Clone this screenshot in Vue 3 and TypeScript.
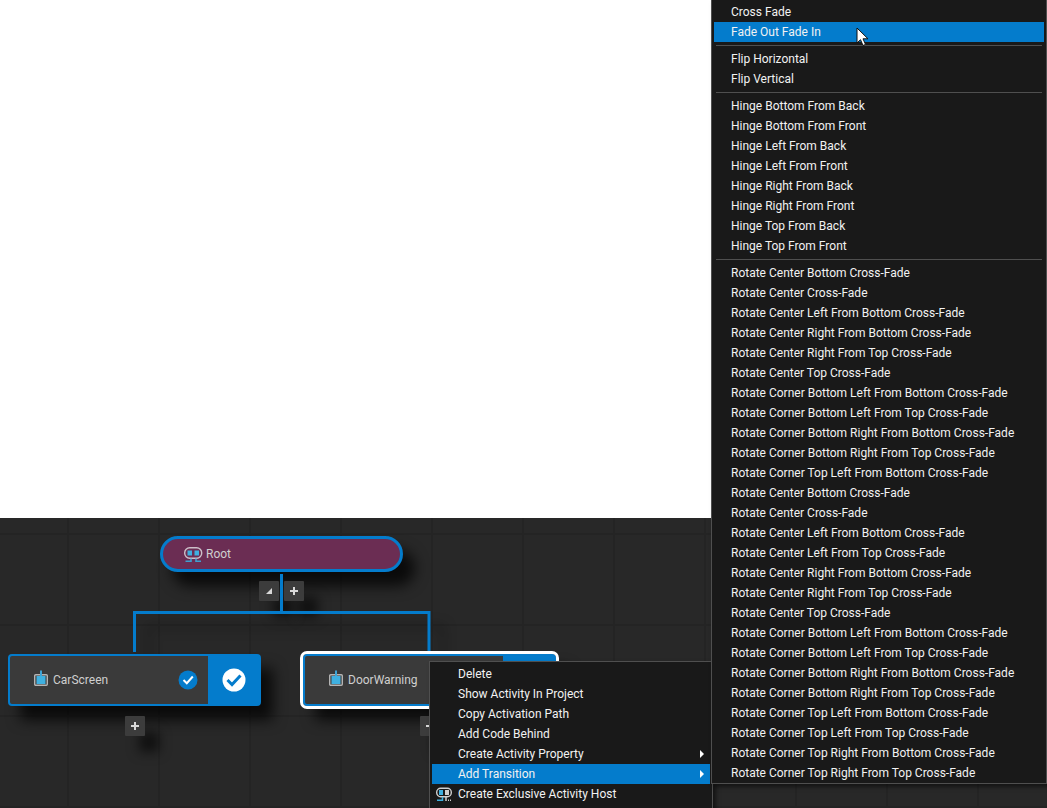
<script setup lang="ts">
interface MenuEntry {
  label: string
  submenu?: boolean
  active?: boolean
  icon?: boolean
}

const contextItems: MenuEntry[] = [
  { label: 'Delete' },
  { label: 'Show Activity In Project' },
  { label: 'Copy Activation Path' },
  { label: 'Add Code Behind' },
  { label: 'Create Activity Property', submenu: true },
  { label: 'Add Transition', submenu: true, active: true },
  { label: 'Create Exclusive Activity Host', icon: true },
]

const activeTransition = 'Fade Out Fade In'

const transitionGroups: string[][] = [
  ['Cross Fade', 'Fade Out Fade In'],
  ['Flip Horizontal', 'Flip Vertical'],
  [
    'Hinge Bottom From Back',
    'Hinge Bottom From Front',
    'Hinge Left From Back',
    'Hinge Left From Front',
    'Hinge Right From Back',
    'Hinge Right From Front',
    'Hinge Top From Back',
    'Hinge Top From Front',
  ],
  [
    'Rotate Center Bottom Cross-Fade',
    'Rotate Center Cross-Fade',
    'Rotate Center Left From Bottom Cross-Fade',
    'Rotate Center Right From Bottom Cross-Fade',
    'Rotate Center Right From Top Cross-Fade',
    'Rotate Center Top Cross-Fade',
    'Rotate Corner Bottom Left From Bottom Cross-Fade',
    'Rotate Corner Bottom Left From Top Cross-Fade',
    'Rotate Corner Bottom Right From Bottom Cross-Fade',
    'Rotate Corner Bottom Right From Top Cross-Fade',
    'Rotate Corner Top Left From Bottom Cross-Fade',
    'Rotate Center Bottom Cross-Fade',
    'Rotate Center Cross-Fade',
    'Rotate Center Left From Bottom Cross-Fade',
    'Rotate Center Left From Top Cross-Fade',
    'Rotate Center Right From Bottom Cross-Fade',
    'Rotate Center Right From Top Cross-Fade',
    'Rotate Center Top Cross-Fade',
    'Rotate Corner Bottom Left From Bottom Cross-Fade',
    'Rotate Corner Bottom Left From Top Cross-Fade',
    'Rotate Corner Bottom Right From Bottom Cross-Fade',
    'Rotate Corner Bottom Right From Top Cross-Fade',
    'Rotate Corner Top Left From Bottom Cross-Fade',
    'Rotate Corner Top Left From Top Cross-Fade',
    'Rotate Corner Top Right From Bottom Cross-Fade',
    'Rotate Corner Top Right From Top Cross-Fade',
  ],
]
</script>

<template>
  <main class="workspace">
    <section class="canvas" aria-label="Activity graph">
      <div class="node root-node">
        <svg width="20" height="18" viewBox="0 0 20 18" aria-hidden="true">
          <rect x="1.700" y="2.700" width="17" height="10.600" rx="5" fill="none" stroke="#cdbfc9" stroke-width="1.400" />
          <rect x="4.500" y="5.500" width="4.500" height="5" fill="#3fb0e0" />
          <rect x="11.500" y="5.500" width="4.500" height="5" fill="#3fb0e0" />
          <path d="M8 13.500V16.200H2.500M13 13.500V16.200H18" fill="none" stroke="#3f9fd0" stroke-width="1.600" />
        </svg>
        <span>Root</span>
      </div>

      <button class="tool collapse" type="button" aria-label="Collapse">
        <svg width="6" height="6" viewBox="0 0 6 6" aria-hidden="true"><path d="M6 0V6H0Z" fill="#d8d8d8" /></svg>
      </button>
      <button class="tool add-root" type="button" aria-label="Add child to Root">
        <svg width="8" height="8" viewBox="0 0 8 8" aria-hidden="true"><path d="M4 0V8M0 4H8" stroke="#d8d8d8" stroke-width="2" /></svg>
      </button>

      <svg class="links" width="460" height="150" viewBox="0 0 460 150" aria-hidden="true">
        <path class="branch" d="M134.500 134V94.500H429V134" fill="none" stroke="#047ccc" stroke-width="3" />
        <path d="M281.500 56V95" stroke="#047ccc" stroke-width="3" />
      </svg>

      <div class="node screen-node car">
        <div class="body">
          <svg width="16" height="20" viewBox="0 0 16 20" aria-hidden="true">
            <rect x="1.700" y="4.700" width="12.600" height="10.600" rx="1" fill="none" stroke="#b4b4b4" stroke-width="1.400" />
            <rect x="3.500" y="6" width="9" height="8" fill="#3fb0e0" />
            <path d="M8 0.500V6" stroke="#3fa4d6" stroke-width="2" />
          </svg>
          <span>CarScreen</span>
          <svg class="state" width="20" height="20" viewBox="0 0 20 20" aria-hidden="true">
            <circle cx="10" cy="10" r="9.500" fill="#047ccc" />
            <path d="M5.500 10L8.800 13.200L14.800 6.500" fill="none" stroke="#fff" stroke-width="2" />
          </svg>
        </div>
        <div class="side">
          <svg width="24" height="24" viewBox="0 0 24 24" aria-hidden="true">
            <circle cx="12" cy="12" r="11.500" fill="#fff" />
            <path d="M5.500 12L10 16.500L18.500 7.500" fill="none" stroke="#047ccc" stroke-width="3" />
          </svg>
        </div>
      </div>

      <div class="node screen-node door">
        <div class="body">
          <svg width="16" height="20" viewBox="0 0 16 20" aria-hidden="true">
            <rect x="1.700" y="4.700" width="12.600" height="10.600" rx="1" fill="none" stroke="#b4b4b4" stroke-width="1.400" />
            <rect x="3.500" y="6" width="9" height="8" fill="#3fb0e0" />
            <path d="M8 0.500V6" stroke="#3fa4d6" stroke-width="2" />
          </svg>
          <span>DoorWarning</span>
        </div>
        <div class="side"></div>
      </div>

      <button class="tool add-car" type="button" aria-label="Add child to CarScreen">
        <svg width="8" height="8" viewBox="0 0 8 8" aria-hidden="true"><path d="M4 0V8M0 4H8" stroke="#d8d8d8" stroke-width="2" /></svg>
      </button>
      <button class="tool add-door" type="button" aria-label="Add child to DoorWarning">
        <svg width="8" height="8" viewBox="0 0 8 8" aria-hidden="true"><path d="M4 0V8M0 4H8" stroke="#d8d8d8" stroke-width="2" /></svg>
      </button>
    </section>

    <div class="menu context" role="menu" aria-label="Activity">
      <button
        v-for="item in contextItems"
        :key="item.label"
        class="item"
        :class="{ active: item.active }"
        type="button"
        role="menuitem"
      >
        <span class="gutter">
          <svg v-if="item.icon" width="18" height="16" viewBox="0 0 18 16" aria-hidden="true">
            <rect x="1.700" y="2.200" width="14.600" height="8.600" rx="4" fill="none" stroke="#d0d0d0" stroke-width="1.400" />
            <rect x="4" y="4" width="4" height="5" fill="#3fb0e0" />
            <rect x="10" y="4" width="4" height="5" fill="#d0d0d0" />
            <path d="M7.500 11V14.300H2" fill="none" stroke="#3fb0e0" stroke-width="1.500" />
            <path d="M11 11V15M13 14.300H14M15 14.300H16" fill="none" stroke="#d0d0d0" stroke-width="1.500" />
          </svg>
        </span>
        <span class="label">{{ item.label }}</span>
        <svg v-if="item.submenu" class="arrow" width="4" height="8" viewBox="0 0 4 8" aria-hidden="true">
          <path d="M0 0L4 4L0 8Z" fill="#fff" />
        </svg>
      </button>
    </div>

    <div class="menu transitions" role="menu" aria-label="Add Transition">
      <div v-for="(group, g) in transitionGroups" :key="g" class="group" role="group">
        <button
          v-for="(label, i) in group"
          :key="i"
          class="item"
          :class="{ active: label === activeTransition }"
          type="button"
          role="menuitem"
        >
          {{ label }}
        </button>
      </div>
    </div>

    <svg class="pointer" width="14" height="20" viewBox="0 0 14 20" aria-hidden="true">
      <path d="M1 1V16L4.500 12.700L7 18.500L9.500 17.400L7 11.800H12Z" fill="#fff" stroke="#111" stroke-width="1" />
    </svg>
  </main>
</template>

<style>
body {
  margin: 0;
  background: #fff;
}
</style>

<style scoped>
.workspace {
  position: relative;
  display: flex;
  flex-direction: column;
  min-height: 100vh;
  overflow: hidden;
  font-family: Roboto, 'Open Sans', sans-serif;
  font-size: 12px;
}

.canvas {
  position: relative;
  height: 290px;
  margin-top: auto;
  background-color: #282828;
  background-image:
    linear-gradient(90deg, #242424 2px, transparent 2px),
    linear-gradient(#242424 2px, transparent 2px);
  background-size: 91px 91px;
  background-position: 67px 15px;
}

.links {
  position: absolute;
  top: 0;
  left: 0;
}

.branch {
  filter: drop-shadow(14px 14px 6px rgba(0, 0, 0, 0.35));
}

.node {
  position: absolute;
  box-sizing: border-box;
  display: flex;
  color: #cfcfcf;
  box-shadow: 12px 14px 14px rgba(0, 0, 0, 0.75);
}

.root-node {
  top: 18px;
  left: 160px;
  width: 243px;
  height: 36px;
  align-items: center;
  gap: 3px;
  padding-left: 20px;
  border: 3px solid #047ccc;
  border-radius: 18px;
  background: #6b2d53;
}

.screen-node {
  width: 253px;
  height: 52px;
  border: 2px solid #047ccc;
  border-radius: 4px;
  background: #3a3a3a;
}

.car {
  top: 136px;
  left: 8px;
}

.door {
  top: 136px;
  left: 303px;
  outline: 3px solid #fff;
}

.body {
  display: flex;
  flex: 1;
  align-items: center;
  gap: 4px;
  padding: 0 10px 0 23px;
}

.state {
  margin-left: auto;
}

.side {
  display: flex;
  flex: none;
  align-items: center;
  justify-content: center;
  width: 51px;
  background: #047ccc;
}

.tool {
  position: absolute;
  display: flex;
  align-items: center;
  justify-content: center;
  width: 20px;
  height: 20px;
  padding: 0;
  border: 0;
  border-radius: 1px;
  background: #3c3c3c;
  box-shadow: 14px 16px 12px rgba(0, 0, 0, 0.6);
}

.collapse {
  top: 63px;
  left: 259px;
}

.add-root {
  top: 63px;
  left: 284px;
}

.add-car {
  top: 198px;
  left: 125px;
}

.add-door {
  top: 198px;
  left: 420px;
}

.menu {
  position: absolute;
  box-sizing: border-box;
  border: 1px solid #4f4f4f;
  background: #191919;
  box-shadow: 3px 3px 4px rgba(0, 0, 0, 0.5);
}

.item {
  display: flex;
  align-items: center;
  width: 100%;
  height: 20px;
  padding: 0;
  border: 0;
  background: transparent;
  color: #f2f2f2;
  font: inherit;
  line-height: 20px;
  text-align: left;
  white-space: nowrap;
}

.item.active {
  background: #047ccc;
}

.context {
  top: 661px;
  left: 429px;
  width: 284px;
  padding: 2px 2px 20px;
}

.gutter {
  display: flex;
  flex: none;
  width: 26px;
  box-sizing: border-box;
  padding-left: 3px;
}

.label {
  flex: 1;
}

.arrow {
  margin-right: 6px;
}

.transitions {
  top: 0;
  left: 711px;
  width: 336px;
  padding: 2px 2px 0;
  border-top: 0;
}

.transitions .item {
  padding-left: 17px;
}

.group + .group::before {
  content: '';
  display: block;
  height: 1px;
  margin: 3px 2px;
  background: #4f4f4f;
}

.pointer {
  position: absolute;
  top: 27px;
  left: 856px;
}
</style>
